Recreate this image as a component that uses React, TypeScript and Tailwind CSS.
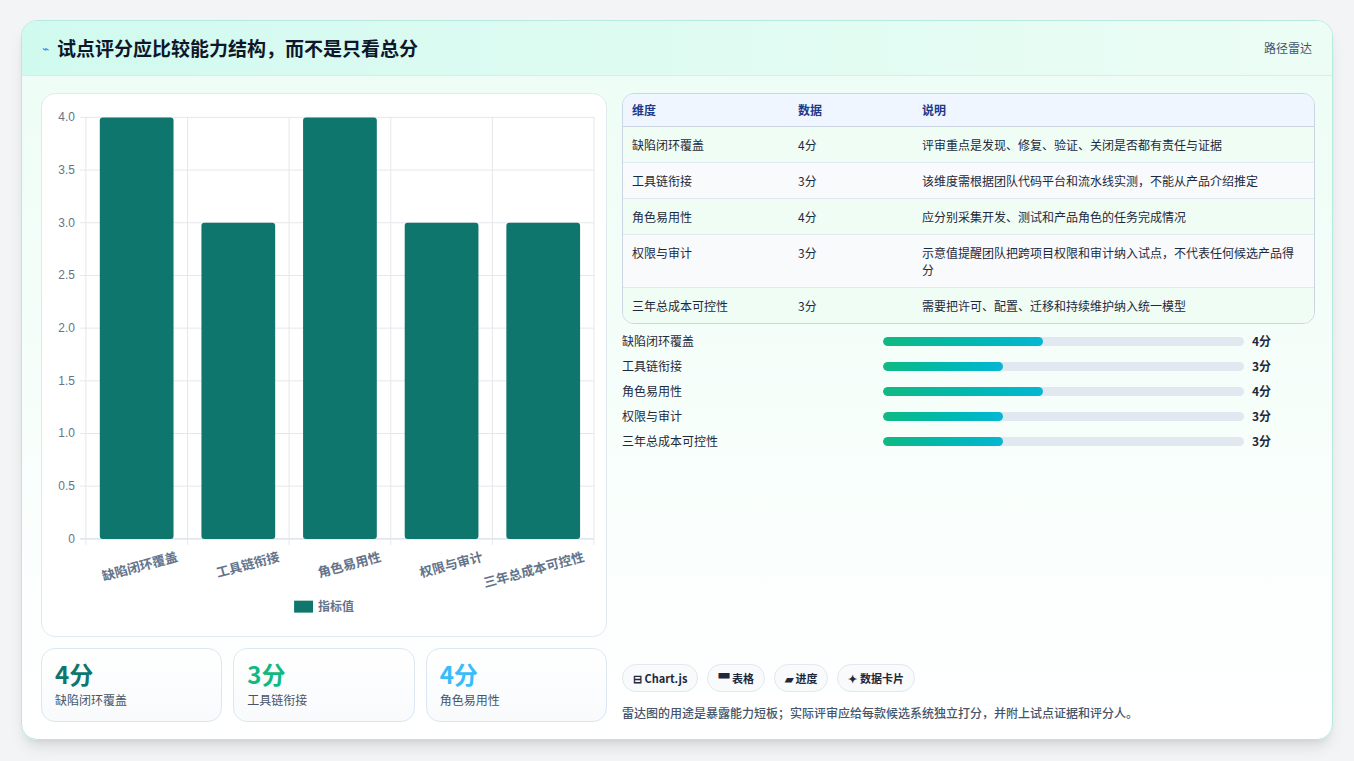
import React from "react";

const dims = [
  { n: "缺陷闭环覆盖", v: 4, d: "评审重点是发现、修复、验证、关闭是否都有责任与证据" },
  { n: "工具链衔接", v: 3, d: "该维度需根据团队代码平台和流水线实测，不能从产品介绍推定" },
  { n: "角色易用性", v: 4, d: "应分别采集开发、测试和产品角色的任务完成情况" },
  { n: "权限与审计", v: 3, d: "示意值提醒团队把跨项目权限和审计纳入试点，不代表任何候选产品得分" },
  { n: "三年总成本可控性", v: 3, d: "需要把许可、配置、迁移和持续维护纳入统一模型" },
];

function Chart() {
  const top = 23, bottom = 446, left = 44, right = 554;
  const ticks = [0, 0.5, 1, 1.5, 2, 2.5, 3, 3.5, 4];
  const y = (v: number) => bottom - (v / 4) * (bottom - top);
  const cw = (right - left) / 5;
  return (
    <svg viewBox="0 0 566 543" width="100%" height="100%" style={{ fontFamily: "'Liberation Sans','Noto Sans CJK SC',sans-serif" }}>
      {ticks.map((t) => (
        <g key={t}>
          <line x1={left - 6} x2={right} y1={y(t)} y2={y(t)} stroke={t === 0 ? "#cbd5e1" : "#e5e7eb"} />
          <text x={33} y={y(t) + 4} textAnchor="end" fontSize="12" fill="#64748b">{t === 0 ? "0" : t.toFixed(1)}</text>
        </g>
      ))}
      {[0, 1, 2, 3, 4, 5].map((i) => (
        <line key={i} x1={left + i * cw} x2={left + i * cw} y1={top} y2={bottom + 6} stroke="#e5e7eb" />
      ))}
      {dims.map((d, i) => {
        const cx = left + cw * i + cw / 2;
        return (
          <g key={d.n}>
            <rect x={cx - 37} y={y(d.v)} width={74} height={bottom - y(d.v)} rx={3} fill="#0f766e" />
            <text transform={`translate(${cx + 42},${bottom + 22}) rotate(-15)`} textAnchor="end" fontSize="13" fontWeight="600" fill="#64748b" style={{ fontFamily: "'Noto Sans CJK SC',sans-serif" }}>{d.n}</text>
          </g>
        );
      })}
      <rect x={253} y={508} width={19} height={12} fill="#0f766e" />
      <text x={277} y={518} fontSize="12" fill="#64748b" fontWeight="600" style={{ fontFamily: "'Noto Sans CJK SC',sans-serif" }}>指标值</text>
    </svg>
  );
}

export default function App() {
  return (
    <div className="w-[1354px] h-[761px] bg-[#f3f4f6] pt-[20px] px-[21px]" style={{ fontFamily: "'Noto Sans CJK SC','Noto Sans',sans-serif" }}>
      <div className="w-[1312px] h-[720px] rounded-[16px] border border-[#b7eadf] bg-gradient-to-b from-[#ecfdf5] to-white shadow-lg overflow-hidden flex flex-col">
        <div className="h-[55px] shrink-0 flex items-center justify-between px-[20px] bg-gradient-to-r from-[#d1faef] to-[#ecfdf5] border-b border-[#d5efe8]">
          <div className="flex items-center gap-[8px]">
            <span className="text-[#3b82f6] text-[12px]">⌁</span>
            <span className="text-[19px] font-bold text-[#0f172a]">试点评分应比较能力结构，而不是只看总分</span>
          </div>
          <span className="text-[12px] text-[#475569]">路径雷达</span>
        </div>
        <div className="flex-1 grid grid-cols-[566px_693px] gap-[15px] px-[19px] pt-[17px] pb-[19px]">
          <div className="flex flex-col gap-[11px]">
            <div className="h-[544px] rounded-[14px] border border-[#e2e8f0] bg-white">
              <Chart />
            </div>
            <div className="grid grid-cols-3 gap-[11px]">
              {[
                ["4分", "缺陷闭环覆盖", "text-[#0f766e]"],
                ["3分", "工具链衔接", "text-[#10b981]"],
                ["4分", "角色易用性", "text-[#38bdf8]"],
              ].map(([v, l, c]) => (
                <div key={l} className="h-[74px] rounded-[14px] border border-[#dbe7f3] bg-gradient-to-b from-white to-[#f8fafc] px-[13px] pt-[10px]">
                  <div className={`text-[24px] leading-[30px] font-bold ${c}`}>{v}</div>
                  <div className="text-[12px] text-[#475569] mt-[2px]">{l}</div>
                </div>
              ))}
            </div>
          </div>
          <div className="flex flex-col justify-between">
            <div>
              <div className="rounded-[12px] border border-[#cbd5e1] overflow-hidden text-[12px] text-[#1e293b]">
                <div className="grid grid-cols-[166px_124px_1fr] h-[33px] items-center bg-[#eff6ff] border-b border-[#cbd5e1] text-[#1e3a8a] font-semibold px-[9px]">
                  <span>维度</span><span>数据</span><span>说明</span>
                </div>
                {dims.map((d, i) => (
                  <div key={d.n} className={`grid grid-cols-[166px_124px_1fr] items-start px-[9px] py-[9px] leading-[17px] ${i < 4 ? "border-b border-[#e2e8f0]" : ""} ${i % 2 === 0 ? "bg-[#f0fdf4]" : "bg-[#f8fafc]"}`}>
                    <span>{d.n}</span><span>{d.v}分</span><span className="pr-[10px]">{d.d}</span>
                  </div>
                ))}
              </div>
              <div className="mt-[8px] flex flex-col gap-[7px]">
                {dims.map((d) => (
                  <div key={d.n} className="flex items-center h-[18px] text-[12px] text-[#1e293b]">
                    <span className="w-[261px]">{d.n}</span>
                    <div className="w-[361px] h-[9px] rounded-full bg-[#e2e8f0] overflow-hidden">
                      <div className="h-full rounded-full bg-gradient-to-r from-[#10b981] to-[#06b6d4]" style={{ width: `${(d.v / 9) * 100}%` }} />
                    </div>
                    <span className="ml-[8px] font-bold">{d.v}分</span>
                  </div>
                ))}
              </div>
            </div>
            <div>
              <div className="flex gap-[9px]">
                {["⊟ Chart.js", "▀ 表格", "▰ 进度", "✦ 数据卡片"].map((c) => (
                  <span key={c} className="h-[28px] px-[10px] flex items-center rounded-full border border-[#e2e8f0] bg-[#f8fafc] text-[11px] font-semibold text-[#1e293b]">{c}</span>
                ))}
              </div>
              <div className="mt-[12px] text-[12px] text-[#475569] font-medium">雷达图的用途是暴露能力短板；实际评审应给每款候选系统独立打分，并附上试点证据和评分人。</div>
            </div>
          </div>
        </div>
      </div>
    </div>
  );
}
